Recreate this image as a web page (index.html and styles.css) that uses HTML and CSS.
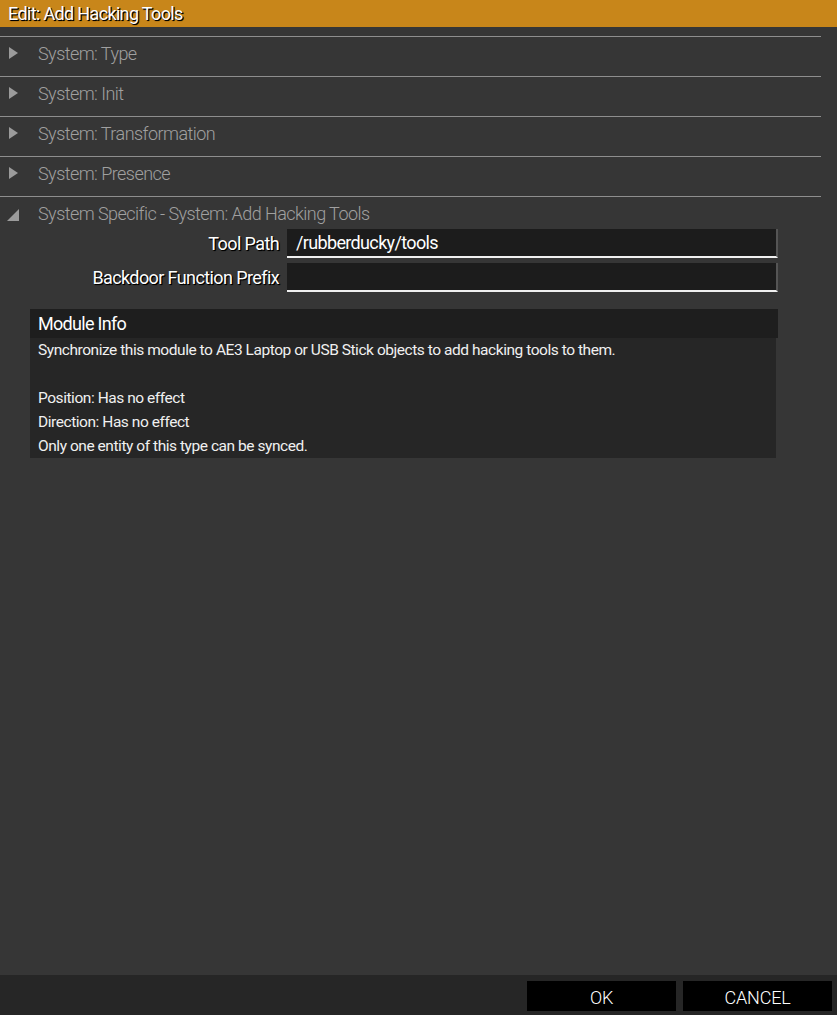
FILE: index.html
```html
<!DOCTYPE html>
<html>
<head>
<meta charset="utf-8">
<link rel="stylesheet" href="styles.css">
</head>
<body>
<div class="dialog">
  <div class="titlebar">Edit: Add Hacking Tools</div>
  <div class="content">
    <div class="section">
      <div class="section-head"><span class="tri tri-right"></span><span class="section-title">System: Type</span></div>
    </div>
    <div class="section">
      <div class="section-head"><span class="tri tri-right"></span><span class="section-title">System: Init</span></div>
    </div>
    <div class="section">
      <div class="section-head"><span class="tri tri-right"></span><span class="section-title">System: Transformation</span></div>
    </div>
    <div class="section">
      <div class="section-head"><span class="tri tri-right"></span><span class="section-title">System: Presence</span></div>
    </div>
    <div class="section open">
      <div class="section-head"><span class="tri tri-open"></span><span class="section-title">System Specific - System: Add Hacking Tools</span></div>
      <div class="fields">
        <div class="field">
          <label class="field-label">Tool Path</label>
          <div class="field-input">/rubberducky/tools</div>
        </div>
        <div class="field">
          <label class="field-label">Backdoor Function Prefix</label>
          <div class="field-input"></div>
        </div>
      </div>
      <div class="module-info">
        <div class="module-head">Module Info</div>
        <div class="module-body">
          <p>Synchronize this module to AE3 Laptop or USB Stick objects to add hacking tools to them.</p>
          <p class="blank">&nbsp;</p>
          <p>Position: Has no effect</p>
          <p>Direction: Has no effect</p>
          <p>Only one entity of this type can be synced.</p>
        </div>
      </div>
    </div>
  </div>
  <div class="footer">
    <button class="btn">OK</button>
    <button class="btn">CANCEL</button>
  </div>
</div>
</body>
</html>
```

FILE: styles.css
```css
* { box-sizing: border-box; }
html, body { margin: 0; padding: 0; }
body {
  width: 837px;
  height: 1015px;
  background: #363636;
  font-family: Roboto, "Liberation Sans", sans-serif;
  overflow: hidden;
}
.dialog {
  display: flex;
  flex-direction: column;
  height: 1015px;
}
.titlebar {
  height: 27px;
  background: #c8861a;
  color: #fff;
  font-size: 18px;
  line-height: 27px;
  padding-left: 8px;
  letter-spacing: -0.65px;
  text-shadow: 1px 1px 1px #000, 1px 1px 0 #000;
}
.content {
  flex: 1;
  padding-top: 9px;
}
.section {
  width: 821px;
  border-top: 1px solid #8e8e8e;
}
.section-head {
  display: flex;
  align-items: center;
  height: 32px;
  margin-bottom: 7px;
}
.section-title {
  color: #a0a0a0;
  font-size: 18px;
  font-weight: 300;
  letter-spacing: -0.55px;
  margin-left: 20px;
}
.tri {
  display: inline-block;
  width: 0;
  height: 0;
  margin-left: 9px;
}
.tri-right {
  border-top: 6px solid transparent;
  border-bottom: 6px solid transparent;
  border-left: 9px solid #9b9b9b;
}
.tri-open {
  margin-left: 7px;
  border-left: 12px solid transparent;
  border-bottom: 12px solid #9b9b9b;
  margin-top: 4px;
  margin-right: -1px;
}
.open .section-head { margin-bottom: 0; }
.fields {
  display: flex;
  flex-direction: column;
  gap: 5px;
}
.field {
  display: flex;
  align-items: center;
  gap: 8px;
}
.field-label {
  width: 279px;
  text-align: right;
  color: #fff;
  font-size: 18px;
  letter-spacing: -0.6px;
  text-shadow: 1px 1px 1px #000, 1px 1px 0 #000;
}
.field-input {
  width: 491px;
  height: 29px;
  background: #1c1c1c;
  border-bottom: 2px solid #f0f0f0;
  border-right: 2px solid #555;
  color: #fff;
  font-size: 18px;
  line-height: 27px;
  padding-left: 9px;
  letter-spacing: -0.65px;
}
.module-info {
  margin: 17px 0 0 30px;
  width: 748px;
}
.module-head {
  height: 29px;
  background: #1e1e1e;
  color: #fff;
  font-size: 18px;
  line-height: 29px;
  padding-left: 8px;
  letter-spacing: -0.7px;
}
.module-body {
  width: 746px;
  background: #262626;
  padding: 0 8px;
  color: #f0f0f0;
  font-size: 15.5px;
  letter-spacing: -0.45px;
}
.module-body p {
  margin: 0;
  line-height: 24px;
}
.footer {
  height: 40px;
  background: #262626;
  display: flex;
  justify-content: flex-end;
  align-items: flex-start;
  gap: 7px;
  padding: 6px 5px 0 0;
}
.btn {
  width: 149px;
  height: 30px;
  background: #000;
  border: none;
  color: #fff;
  font-family: Roboto, "Liberation Sans", sans-serif;
  font-size: 18px;
  font-weight: 300;
  padding: 2px 0 0;
  letter-spacing: -0.2px;
}
```
